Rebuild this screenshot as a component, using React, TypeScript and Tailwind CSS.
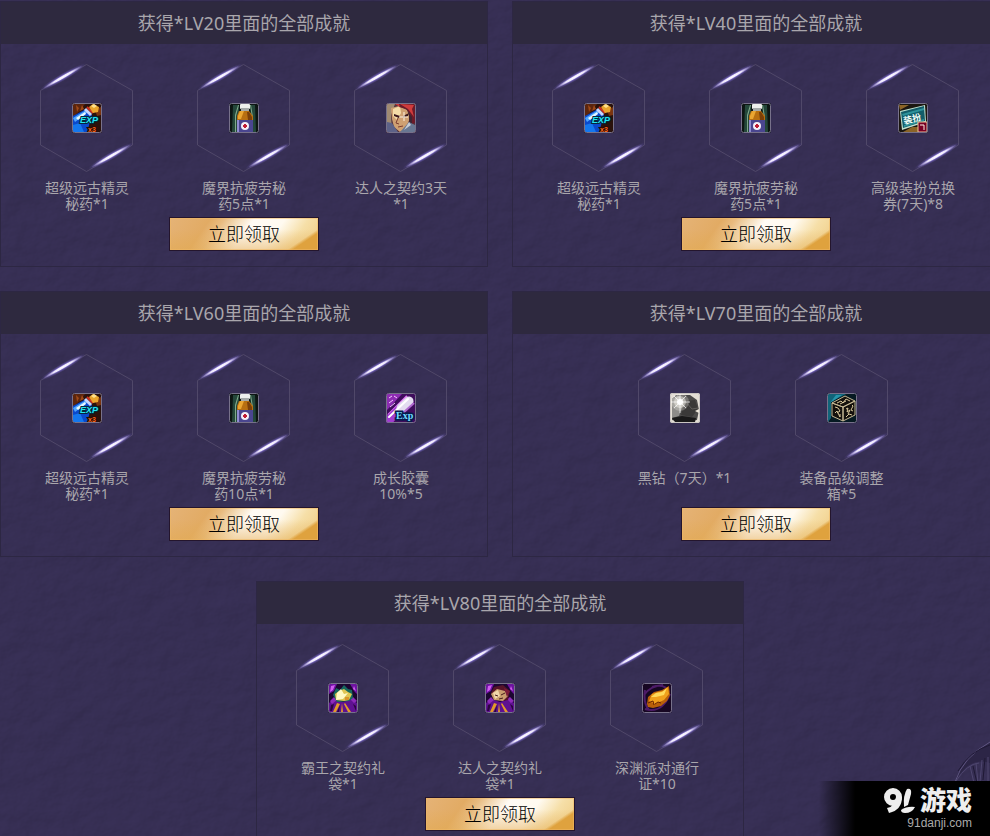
import type { ReactNode } from "react";

type IconName =
  | "exp"
  | "tonic"
  | "hero"
  | "coupon"
  | "capsule"
  | "diamond"
  | "box"
  | "tyrantBag"
  | "heroBag"
  | "ticket";

type Reward = { icon: IconName; label: string };
type Tier = { level: number; rewards: Reward[] };

const tiers: Tier[] = [
  {
    level: 20,
    rewards: [
      { icon: "exp", label: "超级远古精灵秘药*1" },
      { icon: "tonic", label: "魔界抗疲劳秘药5点*1" },
      { icon: "hero", label: "达人之契约3天*1" },
    ],
  },
  {
    level: 40,
    rewards: [
      { icon: "exp", label: "超级远古精灵秘药*1" },
      { icon: "tonic", label: "魔界抗疲劳秘药5点*1" },
      { icon: "coupon", label: "高级装扮兑换券(7天)*8" },
    ],
  },
  {
    level: 60,
    rewards: [
      { icon: "exp", label: "超级远古精灵秘药*1" },
      { icon: "tonic", label: "魔界抗疲劳秘药10点*1" },
      { icon: "capsule", label: "成长胶囊10%*5" },
    ],
  },
  {
    level: 70,
    rewards: [
      { icon: "diamond", label: "黑钻（7天）*1" },
      { icon: "box", label: "装备品级调整箱*5" },
    ],
  },
  {
    level: 80,
    rewards: [
      { icon: "tyrantBag", label: "霸王之契约礼袋*1" },
      { icon: "heroBag", label: "达人之契约礼袋*1" },
      { icon: "ticket", label: "深渊派对通行证*10" },
    ],
  },
];

function Bag({ children }: { children: ReactNode }) {
  return (
    <>
      <rect width="30" height="30" fill="#1c0630" />
      <path d="M1 1h8l-3 7-5 3zM29 1h-7l4 7 3 3z" fill="#6d14a0" />
      <path d="M3 3l4-1-2 5-3 2zM26 3l2 5-3-2z" fill="#d05cf0" />
      <path d="M1 20l5-4 9 3 9-3 5 4v9H1z" fill="#5f1191" />
      <path d="M2 18l4-4 3 3-5 4zM22 16l3-2 4 4-3 2z" fill="#8e2bba" />
      <path d="M9 20l-4 9h3l4-8zM14 20l1 9h-2zM17 20l6 9h-3l-4-8z" fill="#e29a2a" />
      <path d="M3 22l3-1-2 7H2zM12 22l-1 7H9zM25 21l3 2v5z" fill="#2c053f" />
      {children}
    </>
  );
}

const artwork: Record<IconName, ReactNode> = {
  exp: (
    <>
      <rect width="30" height="30" fill="#2a120c" />
      <path d="M1 1h12l-5 7-7 6z" fill="#5c250d" />
      <path d="M4 2l3 3-2 4zM10 2l2 4-4 2z" fill="#a04a18" />
      <path d="M29 4v8l-4 1-2-6z" fill="#7a340f" />
      <path d="M1 13l13-7 6 6-2 7-3 10H1z" fill="#0b49cc" />
      <path d="M1 15l13-8 2 2L3 19z" fill="#4fa6ff" />
      <path d="M4 15l9-6 1 2-8 6z" fill="#e7f7ff" />
      <path d="M1 22l7-2 4 9H1z" fill="#1477ee" />
      <path d="M13 6l6 6" stroke="#c7d6ff" strokeWidth="3" />
      <path d="M15 4l6 6" stroke="#d03222" strokeWidth="2" />
      <path d="M17 4l4-3 6 3-1 5-5 1z" fill="#e9a52c" />
      <path d="M19 3l3-2 3 2-3 2z" fill="#ffe18a" />
      <text x="8" y="20" fontFamily="Liberation Sans, sans-serif" fontSize="9" fontWeight="bold" fontStyle="italic" fill="#24e5f2" stroke="#04263f" strokeWidth="2" paintOrder="stroke">
        EXP
      </text>
      <text x="16" y="29" fontFamily="Liberation Sans, sans-serif" fontSize="7" fontWeight="bold" fill="#ff6a1a" stroke="#2a0903" strokeWidth="2" paintOrder="stroke">
        x3
      </text>
    </>
  ),
  tonic: (
    <>
      <rect width="30" height="30" fill="#0d1613" />
      <path d="M4 2h6v27H3zM21 2h5l1 27h-4z" fill="#24473a" />
      <path d="M9 2h1l-3 11v16H6V12zM21 2h1l2 12v15h-1V14z" fill="#7fa88a" />
      <path d="M10 8h10l4 5v5H8v-5z" fill="#b86f10" />
      <path d="M11 8h4l-3 8H9v-3z" fill="#eaa631" />
      <path d="M18 9h2l3 5v3h-4z" fill="#7b3f08" />
      <rect x="11" y="1" width="10" height="5" rx="1" fill="#eef0ee" />
      <rect x="12" y="5" width="8" height="3" fill="#a4a9a8" />
      <rect x="8" y="17" width="16" height="12" fill="#4a4690" />
      <rect x="8" y="17" width="2" height="12" fill="#8f8bd0" />
      <circle cx="16" cy="23" r="4" fill="#f5eef6" />
      <path d="M16 21v4M14 23h4" stroke="#c01c34" strokeWidth="2" />
    </>
  ),
  hero: (
    <>
      <rect width="30" height="30" fill="#54333d" />
      <path d="M1 1h8L5 12l1 17H1z" fill="#a08a72" />
      <path d="M5 5l8-2 8 4 3 8-4 10-6 4-6-5-2-8z" fill="#cfa072" />
      <path d="M7 6l7-3 1 7-4 7-4-4z" fill="#f4dca8" />
      <path d="M12 1h17v19l-4 1v-9l-5-6-7-2z" fill="#6d1a28" />
      <path d="M14 1l8 5 6 8-2-8 2-4zM9 1l5 3-1-3z" fill="#d03c3c" />
      <path d="M23 10l3 4v7l-3 2z" fill="#3f2432" />
      <path d="M8 11l6 2-1 2-5-2zM17 13l6-3-1 3-5 2z" fill="#3a171c" />
      <path d="M13 14h9M18 9v9" stroke="#fff2e2" strokeWidth="1" />
      <path d="M12 15l-2 5 3 1M12 24l5-1" stroke="#7c3d31" strokeWidth="1" fill="none" />
      <path d="M15 28l8-9 6 3v7H14z" fill="#687792" />
      <path d="M1 19l5 1 6 9H1z" fill="#5d6288" />
      <path d="M23 19l-5 8 7-5z" fill="#c6ccd6" />
    </>
  ),
  coupon: (
    <>
      <rect width="30" height="30" fill="#1b1710" />
      <path d="M1 2h10l-9 5zM14 24h8v5H5z" fill="#8b6427" />
      <path d="M2 8l25-6 1 17-24 8z" fill="#bfe0cf" />
      <path d="M3 9l23-6 1 15-22 7z" fill="#125c69" />
      <path d="M4 11l22-6v2L5 13zM6 22l20-6v2L6 24z" fill="#2d929b" />
      <text x="5" y="19" fontFamily="Noto Sans CJK SC, sans-serif" fontSize="9" fontWeight="bold" fill="#f3fffb" transform="rotate(-14 15 15)">
        装扮
      </text>
      <rect x="20" y="19" width="9" height="10" fill="#780025" stroke="#eec497" />
      <path d="M22 22h4v5" stroke="#fff1e2" strokeWidth="1" fill="none" />
    </>
  ),
  capsule: (
    <>
      <rect width="30" height="30" fill="#3f0d5c" />
      <path d="M1 1h15L1 17z" fill="#8d2cb3" />
      <path d="M3 5l3-2M8 3l3 2M3 10l4-3M4 14l5-4" stroke="#f3c7ff" strokeWidth="1" />
      <path d="M2 22L21 3" stroke="#de75f2" strokeWidth="2" />
      <path d="M3 27L15 15" stroke="#a13cd0" strokeWidth="9" strokeLinecap="round" />
      <path d="M15 15L23 8" stroke="#e3dcf0" strokeWidth="9" strokeLinecap="round" />
      <path d="M3 24L22 6" stroke="#ffffff" strokeWidth="2" strokeLinecap="round" />
      <path d="M17 20L28 10" stroke="#b16bd0" strokeWidth="2" />
      <text x="10" y="26" fontFamily="Liberation Serif, serif" fontSize="10" fontWeight="bold" fill="#72dcff" stroke="#071a4d" strokeWidth="3" paintOrder="stroke">
        Exp
      </text>
    </>
  ),
  diamond: (
    <>
      <rect width="30" height="30" fill="#e4dfd6" />
      <path d="M2 6l4-4h14l7 5 2 10-2 10-16 2-9-2z" fill="#4c4b4a" />
      <path d="M2 6l6-4 6 7-5 14-7 2z" fill="#8d8c89" />
      <path d="M15 8l10-1 3 9-6 8-11-2z" fill="#3a3938" />
      <path d="M15 8l7 8 6-1" stroke="#5f5d5a" strokeWidth="1" fill="none" />
      <path d="M2 25l10-2 14 2-1 4H5z" fill="#191919" />
      <path d="M25 18l4-2v4z" fill="#ece6da" />
      <circle cx="10" cy="9" r="9" fill="#fffdf5" opacity=".25" />
      <circle cx="10" cy="9" r="6" fill="#fffdf5" opacity=".45" />
      <circle cx="10" cy="9" r="3" fill="#fff" />
      <path d="M10 1v19M1 9h19M4 3l12 12M16 3L4 15" stroke="#fff" strokeWidth="1" opacity=".7" />
    </>
  ),
  box: (
    <>
      <rect width="30" height="30" fill="#061a22" />
      <path d="M1 1h18L4 9v16l-3 4z" fill="#116479" />
      <path d="M9 2h6L3 10z" fill="#2796ac" />
      <path d="M5 10l13-7 10 5-12 6zM5 10l11 4v14L5 23zM16 14l12-6v14l-12 6z" fill="#14110d" stroke="#c5b995" strokeWidth="1" />
      <path d="M10 10l4-2 2 2 3-4 4 2M13 11l6-3M8 14l3 1 2 3-3 2M8 20l2-2 3 6v-3M19 16l2-1-1 4 3-2-2 4M25 12l1 1-2 4 2 1M19 24l3-3 3 1" stroke="#d9c89c" strokeWidth="1" fill="none" />
    </>
  ),
  tyrantBag: (
    <Bag>
      <path d="M5 12l3-7 4 2 4-5 4 4 4 1 1 8-4 3-12 1z" fill="#17695f" />
      <path d="M7 11l4-3 5-2 4 3 4 2-3 6-5 1-8-1z" fill="#dfc552" />
      <path d="M9 10l4-4 3 5 4-1-5 6-7 1z" fill="#fff9c3" />
      <path d="M17 14h4v3h-4z" fill="#d9942c" />
    </Bag>
  ),
  heroBag: (
    <Bag>
      <path d="M6 10l3-6 9-2 7 6-2 9-6 1-9-2z" fill="#561329" />
      <path d="M6 11l6-5 8 2 3 5-5 5-9-1z" fill="#c99e6e" />
      <path d="M8 10l5-3 2 6-5 3z" fill="#f1d8ac" />
      <path d="M10 12l3 1M16 12l4-2M14 16l4-1" stroke="#471d1c" strokeWidth="1" />
      <path d="M19 5l6 3-3 6z" fill="#7c1c3a" />
    </Bag>
  ),
  ticket: (
    <>
      <rect width="30" height="30" fill="#170723" />
      <path d="M2 12Q8 3 21 2M3 26Q20 31 28 11M3 7Q1 20 7 27M10 4Q23 0 27 9" stroke="#4d1b68" strokeWidth="2" fill="none" />
      <path d="M5 21l1-7 6-5 8-2 7-4 1 9-3 6-6 5-8 2-5-1z" fill="#b85f0a" />
      <path d="M7 18l3-7 6-2 5-1 5-4 1 7-5 6-9 4z" fill="#f0a01c" />
      <path d="M9 14l5-4 6-1 5-4-3 7-8 2z" fill="#ffd95a" />
      <path d="M6 20l5-2 1 4M13 21l3-2 3 1" stroke="#692300" strokeWidth="1" fill="none" />
    </>
  ),
};

/* Hexagonal slot: faint outline, two light streaks and the item picture in the middle. */
function Slot({ icon }: { icon: IconName }) {
  return (
    <div className="flex h-27 w-full items-center justify-center">
      <svg className="h-27 w-[94px]" viewBox="0 0 94 108" aria-hidden="true">
        <path d="M46.5 .5L92.5 26.5V81L46.5 107.5L.5 81V26.5Z" fill="none" stroke="#504869" strokeWidth="1" />
        <g transform="translate(23 13) rotate(-30)">
          <ellipse rx="26" ry="3.8" fill="url(#streak-halo)" />
          <ellipse rx="22" ry="1.9" fill="url(#streak-core)" />
        </g>
        <g transform="translate(71 92) rotate(-30)">
          <ellipse rx="26" ry="3.8" fill="url(#streak-halo)" />
          <ellipse rx="22" ry="1.9" fill="url(#streak-core)" />
        </g>
        <g transform="translate(32 39)">
          <g clipPath="url(#item-clip)">{artwork[icon]}</g>
          <rect x=".5" y=".5" width="29" height="29" rx="2" fill="none" stroke={icon === "diamond" ? "#c9c5c2" : "#77718a"} />
        </g>
      </svg>
    </div>
  );
}

function TierCard({ tier }: { tier: Tier }) {
  return (
    <section className="flex flex-col items-center border border-[#2d2743] pb-[15px]">
      <h2 className="w-full bg-[#2e293f] text-center text-lg leading-[42px] text-[#a9a6ac]">
        获得*LV{tier.level}里面的全部成就
      </h2>
      <ul className={`flex gap-[63px] pt-5 ${tier.rewards.length === 2 ? "pl-3.5" : ""}`}>
        {tier.rewards.map((reward) => (
          <li key={reward.label} className="flex w-[94px] flex-col gap-2">
            <Slot icon={reward.icon} />
            <p className="min-h-8 text-center text-sm leading-4 text-[#a9a6ac]">{reward.label}</p>
          </li>
        ))}
      </ul>
      <button
        type="button"
        className="mt-[5px] h-[34px] w-[150px] border border-[#24152d] bg-[linear-gradient(146deg,transparent_84%,#dfa23e_87%),linear-gradient(180deg,transparent_35%,#e3ab5280_100%),linear-gradient(125deg,#e5b377_0%,#e2ab64_24%,#e8bb80_32%,#f3d9b4_40%,#fffaf4_50%,#fffaf0_68%,#f6dfa8_82%,#efca80_100%)] text-lg leading-8 font-light text-black shadow-[inset_0_0_0_1px_#f0b86388]"
      >
        立即领取
      </button>
    </section>
  );
}

/* Gradients shared by every slot, declared once. */
function SharedDefs() {
  return (
    <svg className="absolute size-0" aria-hidden="true">
      <defs>
        <radialGradient id="streak-halo">
          <stop offset="0" stopColor="#a793ff" stopOpacity=".95" />
          <stop offset=".5" stopColor="#8170d4" stopOpacity=".6" />
          <stop offset="1" stopColor="#6655b5" stopOpacity="0" />
        </radialGradient>
        <radialGradient id="streak-core">
          <stop offset="0" stopColor="#fff" />
          <stop offset=".5" stopColor="#f3edff" stopOpacity=".95" />
          <stop offset="1" stopColor="#b3a2f2" stopOpacity=".1" />
        </radialGradient>
        <clipPath id="item-clip">
          <rect width="30" height="30" rx="2" />
        </clipPath>
      </defs>
    </svg>
  );
}

/* Faint rough-stone relief behind the cards, with the claw in the corner. */
function Backdrop() {
  return (
    <div className="absolute inset-0" aria-hidden="true">
      <svg className="size-full opacity-20">
        <filter id="stone" x="0" y="0" width="100%" height="100%" colorInterpolationFilters="sRGB">
          <feTurbulence type="fractalNoise" baseFrequency=".04 .05" numOctaves="5" seed="8" />
          <feDiffuseLighting surfaceScale="2" lightingColor="#483f70">
            <feDistantLight azimuth="225" elevation="50" />
          </feDiffuseLighting>
        </filter>
        <rect width="100%" height="100%" filter="url(#stone)" />
      </svg>
      <svg className="absolute right-0 bottom-13 h-11 w-9" viewBox="0 0 36 44" fill="none">
        <path d="M1 42Q7 19 36 3V23Q15 16 1 42Z" fill="#2c2546" />
        <path d="M2 41Q13 24 25 23M16 26l4 17M22 23l2 20M28 20l-2 22M34 17v25" stroke="#4e466f" strokeWidth="1" />
        <path d="M1 42Q9 17 36 2" stroke="#5f5682" strokeWidth="1" />
        <path d="M4 31Q16 11 36 5M19 26l4 17M31 18l-2 22" stroke="#1f1935" strokeWidth="1" />
      </svg>
    </div>
  );
}

function SiteMark() {
  return (
    <aside className="absolute right-0 bottom-0 flex h-[55px] w-[180px] flex-col items-end bg-linear-to-r from-transparent from-5% to-black to-25% pt-1.5 pr-[18px]">
      <div className="flex h-7 items-center gap-1 text-[#eeeeee]">
        <svg className="h-7 w-8" viewBox="0 0 32 28" aria-label="91" role="img">
          <circle cx="9" cy="10" r="6" fill="none" stroke="currentColor" strokeWidth="6" />
          <path d="M18 10Q18 23 5 26L3 21Q12 19 12 10Z" fill="currentColor" />
          <path d="M23 2Q28 1 27 7L24 18 20 20Q19 8 23 2Z" fill="currentColor" />
          <path d="M17 23Q23 19 31 20Q28 26 21 26 17 26 17 23Z" fill="currentColor" />
        </svg>
        <strong className="font-['Liberation_Sans','Noto_Sans_CJK_SC',sans-serif] text-[26px] leading-7 font-black">
          游戏
        </strong>
      </div>
      <span className="font-['Liberation_Sans',sans-serif] text-xs leading-4 text-[#aaaaaa]">91danji.com</span>
    </aside>
  );
}

export default function App() {
  return (
    <main className="relative h-screen overflow-hidden bg-[#372f54] font-['Noto_Sans','Noto_Sans_CJK_SC',sans-serif]">
      <SharedDefs />
      <Backdrop />
      <div className="relative grid min-w-[1000px] grid-cols-[488px_488px] justify-center gap-6 pt-px">
        {tiers.slice(0, 4).map((tier) => (
          <TierCard key={tier.level} tier={tier} />
        ))}
        <div className="col-span-2 mx-auto w-[488px]">
          <TierCard tier={tiers[4]} />
        </div>
      </div>
      <SiteMark />
    </main>
  );
}
